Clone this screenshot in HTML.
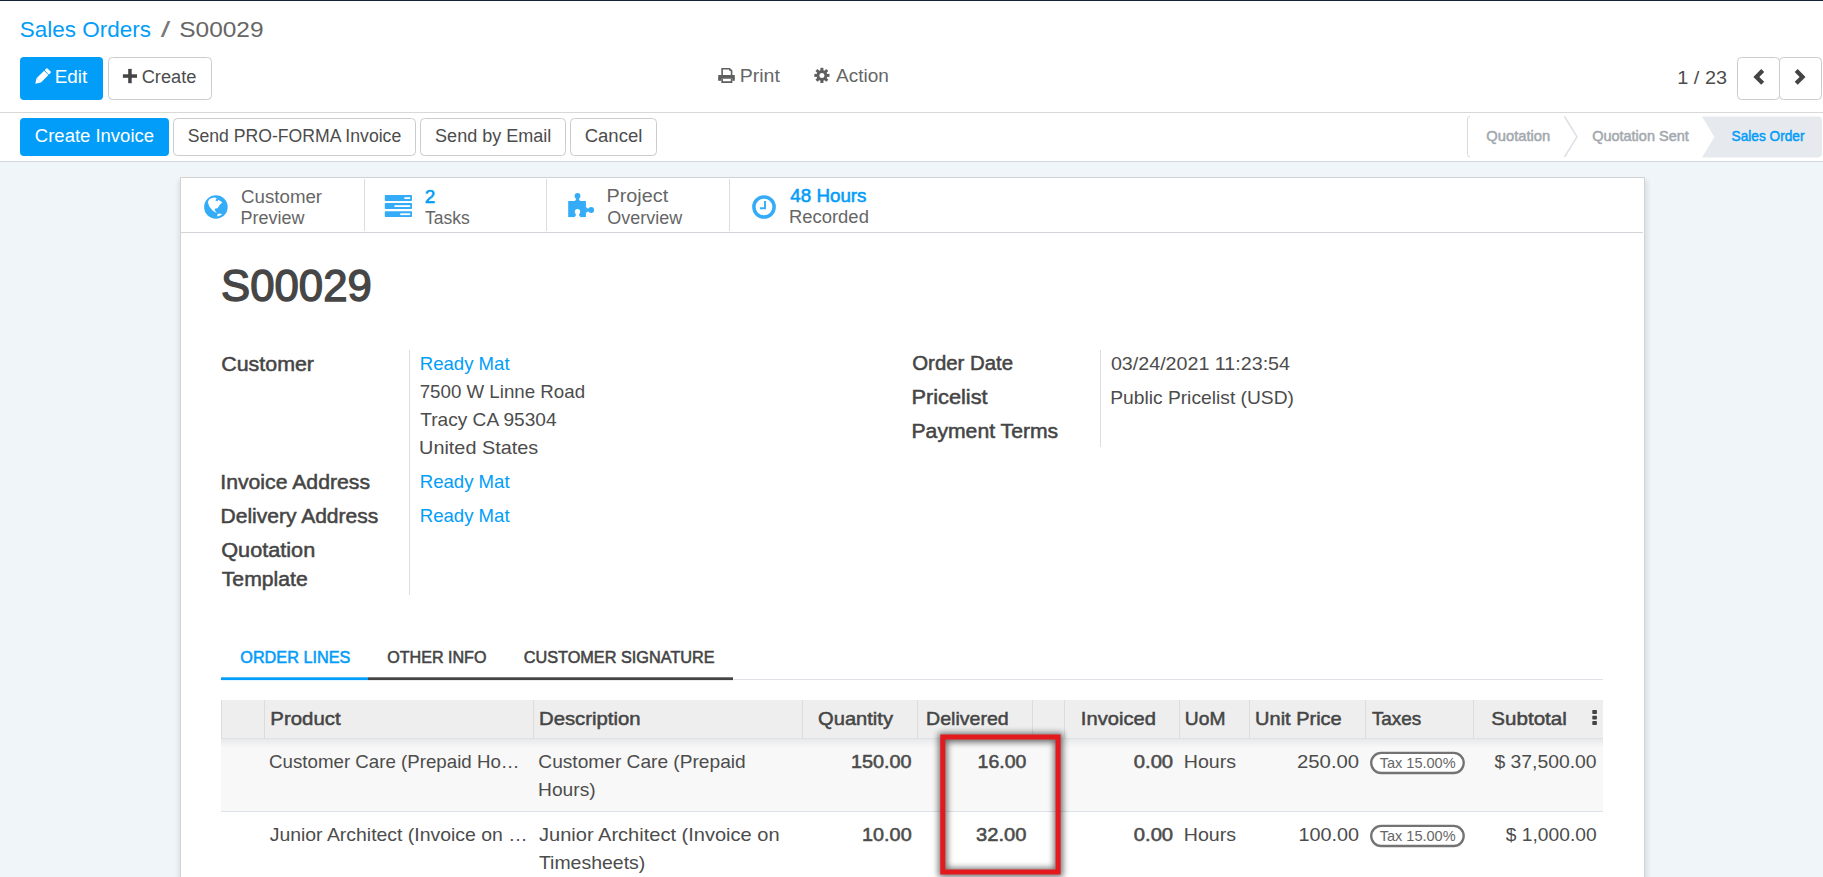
<!DOCTYPE html><html><head><meta charset="utf-8"><title>S00029</title><style>html,body{margin:0;padding:0;width:1823px;height:877px;overflow:hidden;background:#fff;font-family:"Liberation Sans",sans-serif}</style></head><body><svg width="1823" height="877" viewBox="0 0 1823 877" font-family="Liberation Sans, sans-serif" style="display:block"><defs><filter id="sh" x="-5%" y="-5%" width="110%" height="110%"><feGaussianBlur stdDeviation="2"/></filter><linearGradient id="rowsh" x1="0" y1="0" x2="0" y2="1"><stop offset="0" stop-color="#000" stop-opacity="0.06"/><stop offset="1" stop-color="#000" stop-opacity="0"/></linearGradient><filter id="rb" x="-20%" y="-20%" width="140%" height="140%"><feGaussianBlur stdDeviation="3.2"/></filter></defs><rect x="0" y="0" width="1823" height="877" fill="#ffffff" />
<rect x="0" y="162" width="1823" height="715" fill="#f0f5fa" />
<rect x="0" y="0" width="1823" height="1" fill="#142234" />
<text x="19.69" y="37.30" font-size="22" font-weight="normal" fill="#029df8" textLength="131.21" lengthAdjust="spacingAndGlyphs">Sales Orders</text>
<text x="160.70" y="37.30" font-size="22" font-weight="normal" fill="#777777" textLength="9.53" lengthAdjust="spacingAndGlyphs">/</text>
<text x="179.30" y="37.30" font-size="22" font-weight="normal" fill="#666666" textLength="84.27" lengthAdjust="spacingAndGlyphs">S00029</text>
<rect x="20" y="57" width="83" height="43" fill="#029df8" rx="4" />
<g transform="translate(42.2,76.9) rotate(45)" fill="#ffffff"><rect x="-3.1" y="-9.7" width="6.2" height="3.3" rx="0.9"/><rect x="-3.1" y="-5.7" width="6.2" height="10.6"/><path d="M-3.1 4.9 L3.1 4.9 L0 9.8 Z"/></g>
<text x="54.69" y="83.30" font-size="18" font-weight="normal" fill="#ffffff" textLength="32.57" lengthAdjust="spacingAndGlyphs">Edit</text>
<rect x="108.5" y="57.5" width="103" height="42" fill="#ffffff" stroke="#cccccc" stroke-width="1" rx="4" />
<rect x="122.9" y="74.3" width="14.1" height="3.5" fill="#444444" />
<rect x="128.2" y="68.9" width="3.5" height="14.3" fill="#444444" />
<text x="141.69" y="83.30" font-size="18" font-weight="normal" fill="#4c4c4c" textLength="54.67" lengthAdjust="spacingAndGlyphs">Create</text>
<g fill="#5f5f5f"><path d="M721.3 68 H729.8 L732.4 70.6 V74.9 H730.8 V71.2 L729.2 69.6 H722.9 V74.9 H721.3 Z"/><path d="M729.4 68.2 L732.3 71.1 H729.4 Z"/><rect x="718.2" y="74.9" width="16.6" height="3.9" rx="0.5"/><rect x="718.2" y="78" width="3.1" height="2.8"/><rect x="732.4" y="78" width="2.4" height="2.8"/><path d="M721.3 78.7 H722.9 V81.3 H730.8 V78.7 H732.4 V82.9 H721.3 Z"/></g>
<text x="739.74" y="82.10" font-size="18" font-weight="normal" fill="#666666" textLength="40.19" lengthAdjust="spacingAndGlyphs">Print</text>
<g fill="#5f5f5f"><rect x="820.40" y="67.80" width="3" height="3.2" transform="rotate(0 821.9 75.4)"/><rect x="820.40" y="67.80" width="3" height="3.2" transform="rotate(45 821.9 75.4)"/><rect x="820.40" y="67.80" width="3" height="3.2" transform="rotate(90 821.9 75.4)"/><rect x="820.40" y="67.80" width="3" height="3.2" transform="rotate(135 821.9 75.4)"/><rect x="820.40" y="67.80" width="3" height="3.2" transform="rotate(180 821.9 75.4)"/><rect x="820.40" y="67.80" width="3" height="3.2" transform="rotate(225 821.9 75.4)"/><rect x="820.40" y="67.80" width="3" height="3.2" transform="rotate(270 821.9 75.4)"/><rect x="820.40" y="67.80" width="3" height="3.2" transform="rotate(315 821.9 75.4)"/><circle cx="821.9" cy="75.4" r="5.4"/></g><circle cx="821.9" cy="75.4" r="2.5" fill="#ffffff"/>
<text x="836.00" y="82.10" font-size="18" font-weight="normal" fill="#666666" textLength="52.83" lengthAdjust="spacingAndGlyphs">Action</text>
<text x="1677.31" y="83.80" font-size="18.5" font-weight="normal" fill="#4c4c4c" textLength="49.72" lengthAdjust="spacingAndGlyphs">1 / 23</text>
<rect x="1737.5" y="57.5" width="42" height="42" fill="#ffffff" stroke="#cccccc" stroke-width="1" rx="4" />
<rect x="1779.5" y="57.5" width="42" height="42" fill="#ffffff" stroke="#cccccc" stroke-width="1" rx="4" />
<path d="M1753.4 76.9 L1761.2 69.1 L1764.2 72.1 L1759.3 76.9 L1764.2 81.7 L1761.2 84.7 Z" fill="#444"/>
<path d="M1805.5 76.9 L1797.7 69.1 L1794.7 72.1 L1799.6 76.9 L1794.7 81.7 L1797.7 84.7 Z" fill="#444"/>
<rect x="0" y="112" width="1823" height="1" fill="#d8d8d8" />
<rect x="20" y="118" width="149" height="38" fill="#029df8" rx="4" />
<text x="34.88" y="141.80" font-size="18" font-weight="normal" fill="#ffffff" textLength="119.12" lengthAdjust="spacingAndGlyphs">Create Invoice</text>
<rect x="173.5" y="118.5" width="242.0" height="37" fill="#ffffff" stroke="#cccccc" stroke-width="1" rx="4" />
<text x="187.71" y="141.80" font-size="18" font-weight="normal" fill="#4c4c4c" textLength="213.51" lengthAdjust="spacingAndGlyphs">Send PRO-FORMA Invoice</text>
<rect x="420.5" y="118.5" width="145.0" height="37" fill="#ffffff" stroke="#cccccc" stroke-width="1" rx="4" />
<text x="435.09" y="141.80" font-size="18" font-weight="normal" fill="#4c4c4c" textLength="116.24" lengthAdjust="spacingAndGlyphs">Send by Email</text>
<rect x="570.5" y="118.5" width="86.0" height="37" fill="#ffffff" stroke="#cccccc" stroke-width="1" rx="4" />
<text x="584.67" y="141.80" font-size="18" font-weight="normal" fill="#4c4c4c" textLength="57.68" lengthAdjust="spacingAndGlyphs">Cancel</text>
<path d="M1470 116.5 Q1467.5 116.5 1467.5 119 V154.5 Q1467.5 157 1470 157" fill="none" stroke="#d6dbe0" stroke-width="1"/>
<path d="M1564.5 116.5 L1577 136.8 L1564.5 157" fill="none" stroke="#dde1e6" stroke-width="1.6"/>
<path d="M1702 116.5 H1818 Q1822 116.5 1822 120.5 V153.5 Q1822 157.5 1818 157.5 H1702 L1714.3 137 Z" fill="#e6e9ed"/>
<text x="1486.34" y="140.60" font-size="14.5" font-weight="normal" fill="#a2a8ae" stroke="#a2a8ae" stroke-width="0.5" textLength="63.87" lengthAdjust="spacingAndGlyphs">Quotation</text>
<text x="1592.15" y="140.60" font-size="14.5" font-weight="normal" fill="#a2a8ae" stroke="#a2a8ae" stroke-width="0.5" textLength="96.65" lengthAdjust="spacingAndGlyphs">Quotation Sent</text>
<text x="1731.59" y="140.60" font-size="14.5" font-weight="normal" fill="#029df8" stroke="#029df8" stroke-width="0.5" textLength="72.86" lengthAdjust="spacingAndGlyphs">Sales Order</text>
<rect x="0" y="161" width="1823" height="1" fill="#d2d8de" />
<rect x="178" y="180" width="1470" height="720" fill="#000" opacity="0.08" filter="url(#sh)"/>
<rect x="180.5" y="177.5" width="1464" height="720" fill="#ffffff" stroke="#d3d3d3" stroke-width="1" />
<rect x="181" y="232" width="1462" height="1" fill="#d2d6da" />
<line x1="364.5" y1="179" x2="364.5" y2="231" stroke="#dadde0" stroke-width="1"/>
<line x1="546.5" y1="179" x2="546.5" y2="231" stroke="#dadde0" stroke-width="1"/>
<line x1="729.5" y1="179" x2="729.5" y2="231" stroke="#dadde0" stroke-width="1"/>
<circle cx="215.9" cy="207" r="11.8" fill="#35acf8"/>
<path d="M207.8 201.9 L209.5 199 L212 197.9 L214.6 197.4 L216.8 198.3 L215.3 200.5 L217.5 201.2 L218.2 199.8 L222.3 202.3 L219.7 204.9 L217.5 208.2 L215.3 208.5 L214.6 210 L216.8 212.9 L215.3 212.2 L212.8 210.7 L209.5 206.7 L208.4 204.1 Z" fill="#ffffff"/>
<path d="M218.2 213.6 L222.3 214 L220.4 215.5 L217.5 216.5 L217.2 215.1 Z" fill="#ffffff"/>
<text x="241.07" y="202.90" font-size="17.5" font-weight="normal" fill="#666666" textLength="81.01" lengthAdjust="spacingAndGlyphs">Customer</text>
<text x="240.56" y="223.70" font-size="17.5" font-weight="normal" fill="#666666" textLength="63.88" lengthAdjust="spacingAndGlyphs">Preview</text>
<rect x="384.8" y="195.1" width="27.2" height="5.9" fill="#35acf8" rx="0.8" />
<rect x="404.4" y="197.2" width="5.800000000000011" height="1.8" fill="#ffffff" />
<rect x="384.8" y="203.1" width="27.2" height="5.9" fill="#35acf8" rx="0.8" />
<rect x="394.5" y="205.2" width="15.699999999999989" height="1.8" fill="#ffffff" />
<rect x="384.8" y="211.2" width="27.2" height="5.9" fill="#35acf8" rx="0.8" />
<rect x="400.2" y="213.29999999999998" width="10.0" height="1.8" fill="#ffffff" />
<text x="424.65" y="203.00" font-size="17.5" font-weight="normal" fill="#029df8" stroke="#029df8" stroke-width="0.55" textLength="10.51" lengthAdjust="spacingAndGlyphs">2</text>
<text x="424.95" y="223.80" font-size="17.5" font-weight="normal" fill="#666666" textLength="44.68" lengthAdjust="spacingAndGlyphs">Tasks</text>
<g fill="#35acf8"><rect x="568.2" y="201" width="17.7" height="16.1"/><circle cx="577.5" cy="195.9" r="2.9"/><path d="M576.2 197.5 H578.8 Q578.6 200 580.6 201.2 H574.4 Q576.4 200 576.2 197.5 Z"/><circle cx="591.2" cy="210" r="2.9"/><path d="M589.6 208.7 V211.3 Q587.2 211.1 585.8 213.2 V206.8 Q587.2 208.9 589.6 208.7 Z"/></g><circle cx="577.5" cy="211.7" r="2.7" fill="#ffffff"/><path d="M576.2 213 H578.8 Q578.9 216 580.8 217.2 H574.2 Q576.1 216 576.2 213 Z" fill="#ffffff"/>
<text x="606.52" y="201.60" font-size="17.5" font-weight="normal" fill="#666666" textLength="61.63" lengthAdjust="spacingAndGlyphs">Project</text>
<text x="607.29" y="224.30" font-size="17.5" font-weight="normal" fill="#666666" textLength="74.86" lengthAdjust="spacingAndGlyphs">Overview</text>
<circle cx="764" cy="207" r="10.1" fill="none" stroke="#35acf8" stroke-width="3.5"/><path d="M765 201 V208.2 H760" fill="none" stroke="#35acf8" stroke-width="1.9"/>
<text x="790.32" y="202.20" font-size="17.5" font-weight="normal" fill="#029df8" stroke="#029df8" stroke-width="0.55" textLength="76.19" lengthAdjust="spacingAndGlyphs">48 Hours</text>
<text x="788.92" y="223.30" font-size="17.5" font-weight="normal" fill="#666666" textLength="80.00" lengthAdjust="spacingAndGlyphs">Recorded</text>
<text x="221.03" y="300.90" font-size="44.5" font-weight="normal" fill="#464646" stroke="#464646" stroke-width="1.4" textLength="150.76" lengthAdjust="spacingAndGlyphs">S00029</text>
<text x="221.23" y="370.80" font-size="20" font-weight="normal" fill="#454545" stroke="#454545" stroke-width="0.5" textLength="92.78" lengthAdjust="spacingAndGlyphs">Customer</text>
<text x="220.29" y="488.60" font-size="20" font-weight="normal" fill="#454545" stroke="#454545" stroke-width="0.5" textLength="149.75" lengthAdjust="spacingAndGlyphs">Invoice Address</text>
<text x="220.52" y="523.10" font-size="20" font-weight="normal" fill="#454545" stroke="#454545" stroke-width="0.5" textLength="157.78" lengthAdjust="spacingAndGlyphs">Delivery Address</text>
<text x="221.22" y="556.90" font-size="20" font-weight="normal" fill="#454545" stroke="#454545" stroke-width="0.5" textLength="94.01" lengthAdjust="spacingAndGlyphs">Quotation</text>
<text x="221.78" y="586.20" font-size="20" font-weight="normal" fill="#454545" stroke="#454545" stroke-width="0.5" textLength="85.93" lengthAdjust="spacingAndGlyphs">Template</text>
<line x1="409.5" y1="350" x2="409.5" y2="595" stroke="#dddddd" stroke-width="1"/>
<text x="419.71" y="369.80" font-size="19" font-weight="normal" fill="#029df8" textLength="89.89" lengthAdjust="spacingAndGlyphs">Ready Mat</text>
<text x="419.66" y="397.70" font-size="19" font-weight="normal" fill="#4c4c4c" textLength="165.45" lengthAdjust="spacingAndGlyphs">7500 W Linne Road</text>
<text x="420.22" y="425.70" font-size="19" font-weight="normal" fill="#4c4c4c" textLength="136.33" lengthAdjust="spacingAndGlyphs">Tracy CA 95304</text>
<text x="419.11" y="453.60" font-size="19" font-weight="normal" fill="#4c4c4c" textLength="119.05" lengthAdjust="spacingAndGlyphs">United States</text>
<text x="419.71" y="487.90" font-size="19" font-weight="normal" fill="#029df8" textLength="89.89" lengthAdjust="spacingAndGlyphs">Ready Mat</text>
<text x="419.71" y="522.40" font-size="19" font-weight="normal" fill="#029df8" textLength="89.89" lengthAdjust="spacingAndGlyphs">Ready Mat</text>
<text x="912.28" y="370.20" font-size="20" font-weight="normal" fill="#454545" stroke="#454545" stroke-width="0.5" textLength="100.86" lengthAdjust="spacingAndGlyphs">Order Date</text>
<text x="911.46" y="404.20" font-size="20" font-weight="normal" fill="#454545" stroke="#454545" stroke-width="0.5" textLength="76.16" lengthAdjust="spacingAndGlyphs">Pricelist</text>
<text x="911.51" y="438.30" font-size="20" font-weight="normal" fill="#454545" stroke="#454545" stroke-width="0.5" textLength="146.70" lengthAdjust="spacingAndGlyphs">Payment Terms</text>
<line x1="1100.5" y1="350" x2="1100.5" y2="447" stroke="#dddddd" stroke-width="1"/>
<text x="1110.91" y="370.20" font-size="19" font-weight="normal" fill="#4c4c4c" textLength="179.10" lengthAdjust="spacingAndGlyphs">03/24/2021 11:23:54</text>
<text x="1110.16" y="404.20" font-size="19" font-weight="normal" fill="#4c4c4c" textLength="183.84" lengthAdjust="spacingAndGlyphs">Public Pricelist (USD)</text>
<text x="240.27" y="662.80" font-size="16.5" font-weight="normal" fill="#029df8" stroke="#029df8" stroke-width="0.55" textLength="110.03" lengthAdjust="spacingAndGlyphs">ORDER LINES</text>
<text x="387.18" y="662.80" font-size="16.5" font-weight="normal" fill="#444444" stroke="#444444" stroke-width="0.55" textLength="99.27" lengthAdjust="spacingAndGlyphs">OTHER INFO</text>
<text x="523.69" y="662.80" font-size="16.5" font-weight="normal" fill="#444444" stroke="#444444" stroke-width="0.55" textLength="191.00" lengthAdjust="spacingAndGlyphs">CUSTOMER SIGNATURE</text>
<rect x="221" y="679" width="1382" height="1" fill="#dee2e6" />
<rect x="221" y="677.3" width="147" height="2.8" fill="#029df8" />
<rect x="368" y="677.3" width="365" height="2.8" fill="#444444" />
<rect x="221" y="700" width="1382" height="38" fill="#eeeeee" />
<rect x="221" y="738" width="1382" height="1" fill="#dde2e8" />
<line x1="264.5" y1="700" x2="264.5" y2="738" stroke="#dcdcdc" stroke-width="1"/>
<line x1="533.5" y1="700" x2="533.5" y2="738" stroke="#dcdcdc" stroke-width="1"/>
<line x1="802.5" y1="700" x2="802.5" y2="738" stroke="#dcdcdc" stroke-width="1"/>
<line x1="917.5" y1="700" x2="917.5" y2="738" stroke="#dcdcdc" stroke-width="1"/>
<line x1="1032.5" y1="700" x2="1032.5" y2="738" stroke="#dcdcdc" stroke-width="1"/>
<line x1="1064.5" y1="700" x2="1064.5" y2="738" stroke="#dcdcdc" stroke-width="1"/>
<line x1="1179.5" y1="700" x2="1179.5" y2="738" stroke="#dcdcdc" stroke-width="1"/>
<line x1="1249.5" y1="700" x2="1249.5" y2="738" stroke="#dcdcdc" stroke-width="1"/>
<line x1="1365.5" y1="700" x2="1365.5" y2="738" stroke="#dcdcdc" stroke-width="1"/>
<line x1="1473.5" y1="700" x2="1473.5" y2="738" stroke="#dcdcdc" stroke-width="1"/>
<line x1="221.5" y1="700" x2="221.5" y2="738" stroke="#dcdcdc" stroke-width="1"/>
<text x="270.37" y="724.90" font-size="19" font-weight="normal" fill="#454545" stroke="#454545" stroke-width="0.5" textLength="70.26" lengthAdjust="spacingAndGlyphs">Product</text>
<text x="538.98" y="724.90" font-size="19" font-weight="normal" fill="#454545" stroke="#454545" stroke-width="0.5" textLength="101.59" lengthAdjust="spacingAndGlyphs">Description</text>
<text x="818.10" y="724.90" font-size="19" font-weight="normal" fill="#454545" stroke="#454545" stroke-width="0.5" textLength="74.89" lengthAdjust="spacingAndGlyphs">Quantity</text>
<text x="926.03" y="724.90" font-size="19" font-weight="normal" fill="#454545" stroke="#454545" stroke-width="0.5" textLength="82.73" lengthAdjust="spacingAndGlyphs">Delivered</text>
<text x="1080.89" y="724.90" font-size="19" font-weight="normal" fill="#454545" stroke="#454545" stroke-width="0.5" textLength="75.01" lengthAdjust="spacingAndGlyphs">Invoiced</text>
<text x="1184.86" y="724.90" font-size="19" font-weight="normal" fill="#454545" stroke="#454545" stroke-width="0.5" textLength="40.61" lengthAdjust="spacingAndGlyphs">UoM</text>
<text x="1255.10" y="724.90" font-size="19" font-weight="normal" fill="#454545" stroke="#454545" stroke-width="0.5" textLength="86.59" lengthAdjust="spacingAndGlyphs">Unit Price</text>
<text x="1371.92" y="724.90" font-size="19" font-weight="normal" fill="#454545" stroke="#454545" stroke-width="0.5" textLength="49.38" lengthAdjust="spacingAndGlyphs">Taxes</text>
<text x="1491.37" y="724.90" font-size="19" font-weight="normal" fill="#454545" stroke="#454545" stroke-width="0.5" textLength="75.46" lengthAdjust="spacingAndGlyphs">Subtotal</text>
<rect x="1592.3" y="710.1" width="4.6" height="3.8" fill="#444444" rx="0.7" />
<rect x="1592.3" y="715.7" width="4.6" height="3.8" fill="#444444" rx="0.7" />
<rect x="1592.3" y="721.1" width="4.6" height="3.8" fill="#444444" rx="0.7" />
<rect x="221" y="739" width="1382" height="72" fill="#f8f8f8" />
<rect x="221" y="739" width="1382" height="9" fill="url(#rowsh)" />
<rect x="221" y="811" width="1382" height="1" fill="#dde2e8" />
<text x="269.07" y="768.10" font-size="18.5" font-weight="normal" fill="#4c4c4c" textLength="250.44" lengthAdjust="spacingAndGlyphs">Customer Care (Prepaid Ho…</text>
<text x="538.34" y="768.10" font-size="18.5" font-weight="normal" fill="#4c4c4c" textLength="207.36" lengthAdjust="spacingAndGlyphs">Customer Care (Prepaid</text>
<text x="538.06" y="796.20" font-size="18.5" font-weight="normal" fill="#4c4c4c" textLength="57.60" lengthAdjust="spacingAndGlyphs">Hours)</text>
<text x="850.91" y="768.10" font-size="18.5" font-weight="normal" fill="#4c4c4c" stroke="#4c4c4c" stroke-width="0.55" textLength="60.66" lengthAdjust="spacingAndGlyphs">150.00</text>
<text x="977.64" y="768.10" font-size="18.5" font-weight="normal" fill="#4c4c4c" stroke="#4c4c4c" stroke-width="0.55" textLength="48.69" lengthAdjust="spacingAndGlyphs">16.00</text>
<text x="1133.79" y="768.10" font-size="18.5" font-weight="normal" fill="#4c4c4c" stroke="#4c4c4c" stroke-width="0.55" textLength="39.34" lengthAdjust="spacingAndGlyphs">0.00</text>
<text x="1183.73" y="768.10" font-size="18.5" font-weight="normal" fill="#4c4c4c" textLength="52.31" lengthAdjust="spacingAndGlyphs">Hours</text>
<text x="1296.98" y="768.10" font-size="18.5" font-weight="normal" fill="#4c4c4c" textLength="62.20" lengthAdjust="spacingAndGlyphs">250.00</text>
<text x="1494.41" y="768.10" font-size="18.5" font-weight="normal" fill="#4c4c4c" textLength="102.23" lengthAdjust="spacingAndGlyphs">$ 37,500.00</text>
<text x="269.71" y="840.80" font-size="18.5" font-weight="normal" fill="#4c4c4c" textLength="257.89" lengthAdjust="spacingAndGlyphs">Junior Architect (Invoice on …</text>
<text x="539.00" y="840.80" font-size="18.5" font-weight="normal" fill="#4c4c4c" textLength="240.53" lengthAdjust="spacingAndGlyphs">Junior Architect (Invoice on</text>
<text x="538.91" y="869.20" font-size="18.5" font-weight="normal" fill="#4c4c4c" textLength="106.35" lengthAdjust="spacingAndGlyphs">Timesheets)</text>
<text x="862.12" y="840.80" font-size="18.5" font-weight="normal" fill="#4c4c4c" stroke="#4c4c4c" stroke-width="0.55" textLength="49.53" lengthAdjust="spacingAndGlyphs">10.00</text>
<text x="976.00" y="840.80" font-size="18.5" font-weight="normal" fill="#4c4c4c" stroke="#4c4c4c" stroke-width="0.55" textLength="50.36" lengthAdjust="spacingAndGlyphs">32.00</text>
<text x="1133.79" y="840.80" font-size="18.5" font-weight="normal" fill="#4c4c4c" stroke="#4c4c4c" stroke-width="0.55" textLength="39.34" lengthAdjust="spacingAndGlyphs">0.00</text>
<text x="1183.73" y="840.80" font-size="18.5" font-weight="normal" fill="#4c4c4c" textLength="52.31" lengthAdjust="spacingAndGlyphs">Hours</text>
<text x="1298.51" y="840.80" font-size="18.5" font-weight="normal" fill="#4c4c4c" textLength="60.66" lengthAdjust="spacingAndGlyphs">100.00</text>
<text x="1505.81" y="840.80" font-size="18.5" font-weight="normal" fill="#4c4c4c" textLength="90.80" lengthAdjust="spacingAndGlyphs">$ 1,000.00</text>
<rect x="1371.2" y="752.9" width="92.5" height="20.1" fill="#ffffff" stroke="#737373" stroke-width="2.3" rx="10" />
<text x="1379.71" y="768.00" font-size="15" font-weight="normal" fill="#666666" textLength="75.91" lengthAdjust="spacingAndGlyphs">Tax 15.00%</text>
<rect x="1371.2" y="825.9" width="92.5" height="20.1" fill="#ffffff" stroke="#737373" stroke-width="2.3" rx="10" />
<text x="1379.71" y="841.00" font-size="15" font-weight="normal" fill="#666666" textLength="75.91" lengthAdjust="spacingAndGlyphs">Tax 15.00%</text>
<rect x="943" y="737.5" width="115.5" height="135" fill="none" stroke="#000" stroke-width="9" opacity="0.55" filter="url(#rb)"/>
<rect x="942.8" y="737" width="115.3" height="135" fill="none" stroke="#e3191e" stroke-width="5" /></svg></body></html>
